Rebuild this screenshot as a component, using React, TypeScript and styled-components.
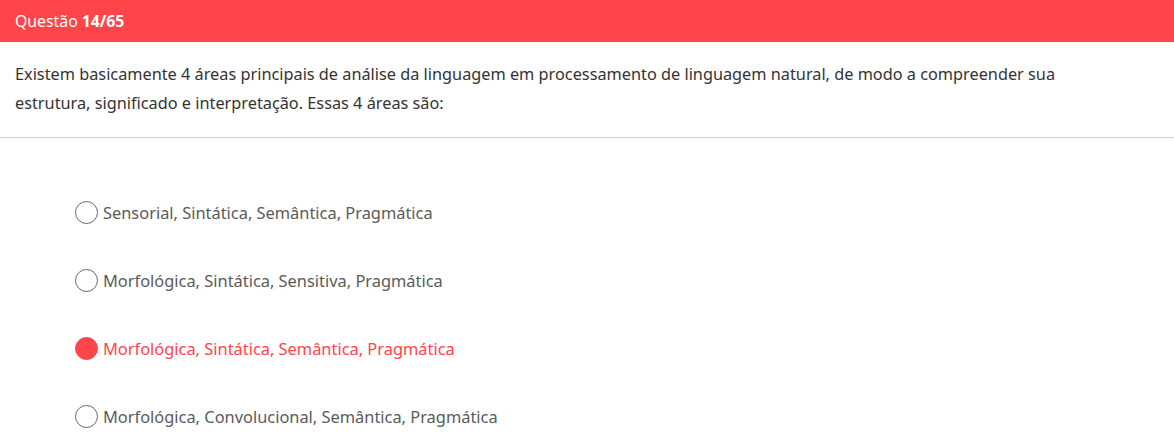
import React from "react";
import styled, { createGlobalStyle } from "styled-components";

const Global = createGlobalStyle`
  html, body { margin: 0; padding: 0; background: #fff; }
  body { font-family: "Noto Sans", "Open Sans", sans-serif; }
`;

const Header = styled.header`
  height: 42px;
  background: #ff444a;
  color: #fff;
  display: flex;
  align-items: center;
  padding: 0 15px;
  font-size: 15.8px;
  strong { font-weight: 700; margin-left: 4px; }
`;

const StatementBox = styled.div`
  padding: 18px 15px 19px;
  border-bottom: 1px solid #cfcfcf;
`;

const Statement = styled.p`
  margin: 0;
  max-width: 1075px;
  font-size: 16.3px;
  line-height: 29px;
  color: #333;
`;

const Options = styled.ul`
  list-style: none;
  margin: 0;
  padding: 63px 0 0 75px;
  display: flex;
  flex-direction: column;
  gap: 45px;
`;

const Option = styled.li<{ $selected?: boolean }>`
  display: flex;
  align-items: center;
  gap: 5px;
  height: 23px;
  font-size: 16.4px;
  color: ${(p) => (p.$selected ? "#ff444a" : "#5a5a5a")};
`;

const Radio = styled.span<{ $selected?: boolean }>`
  width: 23px;
  height: 23px;
  box-sizing: border-box;
  border-radius: 50%;
  border: 1px solid ${(p) => (p.$selected ? "#ff444a" : "#666")};
  background: ${(p) => (p.$selected ? "#ff444a" : "#fff")};
  flex-shrink: 0;
`;

const options = [
  "Sensorial, Sintática, Semântica, Pragmática",
  "Morfológica, Sintática, Sensitiva, Pragmática",
  "Morfológica, Sintática, Semântica, Pragmática",
  "Morfológica, Convolucional, Semântica, Pragmática",
];

export default function App() {
  return (
    <>
      <Global />
      <Header>
        Questão <strong>14/65</strong>
      </Header>
      <StatementBox>
        <Statement>
          Existem basicamente 4 áreas principais de análise da linguagem em processamento de linguagem natural, de modo a compreender sua estrutura, significado e interpretação. Essas 4 áreas são:
        </Statement>
      </StatementBox>
      <Options>
        {options.map((o, i) => (
          <Option key={i} $selected={i === 2}>
            <Radio $selected={i === 2} />
            {o}
          </Option>
        ))}
      </Options>
    </>
  );
}
